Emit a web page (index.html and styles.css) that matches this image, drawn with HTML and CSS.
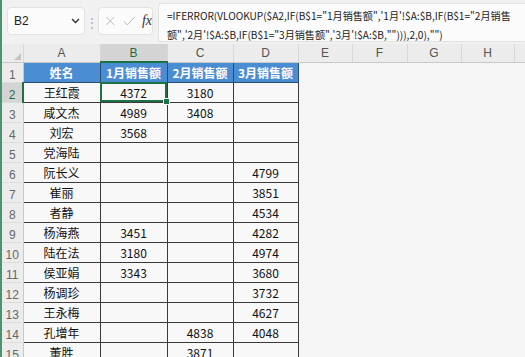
FILE: index.html
```html
<!DOCTYPE html>
<html lang="zh-CN">
<head>
  <meta charset="UTF-8">
  <title>销售额汇总</title>
  <link rel="stylesheet" href="styles.css">
</head>
<body>
  <div class="app">
    <div class="formula-bar">
      <div class="name-box">
        <span>B2</span>
        <svg class="chev" width="9" height="6" viewBox="0 0 9 6"><path d="M1 1l3.5 3.5L8 1" fill="none" stroke="#333" stroke-width="1.4"/></svg>
      </div>
      <div class="grip">⋮</div>
      <div class="fx-box">
        <svg width="12" height="12" viewBox="0 0 12 12"><path d="M1.5 1.5l9 9M10.5 1.5l-9 9" stroke="#b9b9b9" stroke-width="1.1"/></svg>
        <svg width="14" height="12" viewBox="0 0 14 12"><path d="M1 6.5l4 4L13 1.5" fill="none" stroke="#b9b9b9" stroke-width="1.1"/></svg>
        <span class="fx">fx</span>
      </div>
      <div class="formula">
        <div class="line">=IFERROR(VLOOKUP($A2,IF(B$1="1月销售额",'1月'!$A:$B,IF(B$1="2月销售</div>
        <div class="line">额",'2月'!$A:$B,IF(B$1="3月销售额",'3月'!$A:$B,""))),2,0),"")</div>
      </div>
    </div>

    <table class="sheet">
      <colgroup>
        <col class="w-rn"><col class="w-a"><col class="w-b"><col class="w-c"><col class="w-d">
        <col class="w-e"><col class="w-f"><col class="w-g"><col class="w-h"><col class="w-i">
      </colgroup>
      <thead>
        <tr>
          <th class="corner"><span class="tri"></span></th>
          <th>A</th><th class="sel">B</th><th>C</th><th>D</th><th>E</th><th>F</th><th>G</th><th>H</th><th></th>
        </tr>
      </thead>
      <tbody>
        <tr><th>1</th><td class="hd">姓名</td><td class="hd">1月销售额</td><td class="hd">2月销售额</td><td class="hd">3月销售额</td><td></td><td></td><td></td><td></td><td></td></tr>
        <tr><th class="sel">2</th><td class="d">王红霞</td><td class="d active">4372<span class="handle"></span></td><td class="d">3180</td><td class="d"></td><td></td><td></td><td></td><td></td><td></td></tr>
        <tr><th>3</th><td class="d">咸文杰</td><td class="d">4989</td><td class="d">3408</td><td class="d"></td><td></td><td></td><td></td><td></td><td></td></tr>
        <tr><th>4</th><td class="d">刘宏</td><td class="d">3568</td><td class="d"></td><td class="d"></td><td></td><td></td><td></td><td></td><td></td></tr>
        <tr><th>5</th><td class="d">党海陆</td><td class="d"></td><td class="d"></td><td class="d"></td><td></td><td></td><td></td><td></td><td></td></tr>
        <tr><th>6</th><td class="d">阮长义</td><td class="d"></td><td class="d"></td><td class="d">4799</td><td></td><td></td><td></td><td></td><td></td></tr>
        <tr><th>7</th><td class="d">崔丽</td><td class="d"></td><td class="d"></td><td class="d">3851</td><td></td><td></td><td></td><td></td><td></td></tr>
        <tr><th>8</th><td class="d">者静</td><td class="d"></td><td class="d"></td><td class="d">4534</td><td></td><td></td><td></td><td></td><td></td></tr>
        <tr><th>9</th><td class="d">杨海燕</td><td class="d">3451</td><td class="d"></td><td class="d">4282</td><td></td><td></td><td></td><td></td><td></td></tr>
        <tr><th>10</th><td class="d">陆在法</td><td class="d">3180</td><td class="d"></td><td class="d">4974</td><td></td><td></td><td></td><td></td><td></td></tr>
        <tr><th>11</th><td class="d">侯亚娟</td><td class="d">3343</td><td class="d"></td><td class="d">3680</td><td></td><td></td><td></td><td></td><td></td></tr>
        <tr><th>12</th><td class="d">杨调珍</td><td class="d"></td><td class="d"></td><td class="d">3732</td><td></td><td></td><td></td><td></td><td></td></tr>
        <tr><th>13</th><td class="d">王永梅</td><td class="d"></td><td class="d"></td><td class="d">4627</td><td></td><td></td><td></td><td></td><td></td></tr>
        <tr><th>14</th><td class="d">孔增年</td><td class="d"></td><td class="d">4838</td><td class="d">4048</td><td></td><td></td><td></td><td></td><td></td></tr>
        <tr><th>15</th><td class="d">董胜</td><td class="d"></td><td class="d">3871</td><td class="d"></td><td></td><td></td><td></td><td></td><td></td></tr>
      </tbody>
    </table>
  </div>
</body>
</html>
```

FILE: styles.css
```css
body {
  margin: 0;
  background: #f5f5f5;
  font-family: "Noto Sans CJK SC", "Noto Sans", sans-serif;
  overflow: hidden;
}

.app {
  border-left: 2px solid #4f9070;
  height: 357px;
  box-sizing: border-box;
  overflow: hidden;
}

/* formula bar */
.formula-bar {
  display: flex;
  align-items: flex-start;
  height: 44px;
  background: #f1f1f1;
  padding: 3px 0 0 5px;
  box-sizing: border-box;
}

.name-box {
  display: flex;
  align-items: center;
  justify-content: space-between;
  width: 78px;
  height: 28px;
  margin-top: 4px;
  padding: 0 4px 0 6px;
  box-sizing: border-box;
  background: #fbfbfb;
  border: 1px solid #e2e2e2;
  border-radius: 4px;
  font-family: "Liberation Sans", sans-serif;
  font-size: 12px;
  color: #222;
}

.grip {
  width: 13px;
  margin-top: 10px;
  text-align: center;
  font-size: 12px;
  color: #aaa;
}

.fx-box {
  display: flex;
  align-items: center;
  gap: 7px;
  width: 55px;
  height: 28px;
  margin-top: 4px;
  padding-left: 6px;
  box-sizing: border-box;
  background: #fbfbfb;
  border: 1px solid #e2e2e2;
  border-radius: 4px;
}

.fx {
  font-family: "Liberation Serif", serif;
  font-style: italic;
  font-size: 14px;
  color: #333;
}

.formula {
  flex: 1;
  min-width: 0;
  height: 39px;
  margin-left: 5px;
  padding: 2px 0 0 8px;
  box-sizing: border-box;
  background: #fbfbfb;
  border: 1px solid #e2e2e2;
  border-right: none;
  border-radius: 4px 0 0 4px;
  font-size: 10.1px;
  line-height: 19px;
  color: #222;
  overflow: hidden;
}

.line {
  white-space: nowrap;
}

/* sheet */
.sheet {
  border-collapse: collapse;
  table-layout: fixed;
  width: 523px;
  font-size: 12px;
}

.w-rn { width: 21px; }
.w-a { width: 77px; }
.w-b { width: 67px; }
.w-c { width: 66px; }
.w-d { width: 65px; }
.w-e { width: 54px; }
.w-f { width: 55px; }
.w-g { width: 54px; }
.w-h { width: 53px; }
.w-i { width: 11px; }

.sheet thead th {
  height: 17px;
  padding: 0;
  background: #ececec;
  border-right: 1px solid #d8d8d8;
  border-bottom: 1px solid #c8c8c8;
  font-family: "Liberation Sans", sans-serif;
  font-weight: normal;
  font-size: 12px;
  color: #555;
}

.sheet thead th.sel {
  background: #d4d4d4;
  color: #1e6e44;
  border-bottom: 2px solid #1e7145;
}

.corner {
  position: relative;
}

.tri {
  position: absolute;
  right: 2px;
  bottom: 2px;
  border-left: 7px solid transparent;
  border-bottom: 7px solid #c4c4c4;
}

.sheet tbody th {
  height: 19px;
  padding: 0;
  background: #ececec;
  border-right: 1px solid #c8c8c8;
  border-bottom: 1px solid #dcdcdc;
  font-family: "Liberation Sans", sans-serif;
  font-weight: normal;
  font-size: 12px;
  color: #666;
  text-align: center;
  vertical-align: bottom;
}

.sheet tbody th.sel {
  background: #d4d4d4;
  color: #1e6e44;
  border-right: 2px solid #1e7145;
}

.sheet td {
  padding: 0;
  text-align: center;
  color: #111;
}

.hd {
  background: #4b8dd3;
  color: #fff !important;
  font-weight: bold;
  border: 1px solid #2a4c70;
}

.d {
  background: #f8f8f8;
  border: 1px solid #3a3a3a;
}

.active {
  position: relative;
  outline: 2px solid #1e7145;
  outline-offset: -2px;
}

.handle {
  position: absolute;
  right: -3px;
  bottom: -3px;
  width: 5px;
  height: 5px;
  background: #1e7145;
  border: 1px solid #fff;
  z-index: 2;
}
```
